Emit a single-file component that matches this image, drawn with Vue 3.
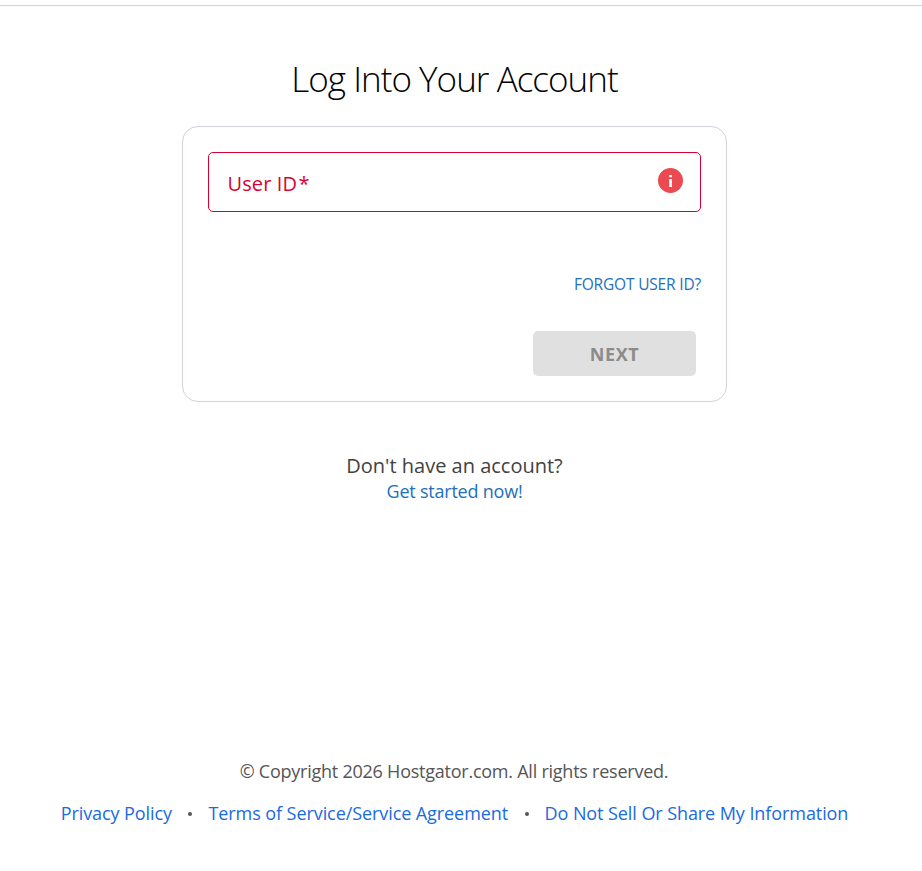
<template>
    <div class="page">
        <div class="topline"></div>
        <main class="login">
            <h1>Log Into Your Account</h1>
            <form class="card" @submit.prevent>
                <div class="field">
                    <label for="userid">User ID<span>*</span></label>
                    <input id="userid" v-model="userId" type="text" />
                    <svg class="info" viewBox="0 0 25 25">
                        <circle cx="12.5" cy="12.5" r="12.5" fill="#ea4a50" />
                        <rect x="11.2" y="7" width="2.7" height="2.2" fill="#fff" />
                        <rect x="11.2" y="11" width="2.7" height="8" fill="#fff" />
                    </svg>
                </div>
                <a href="#" class="forgot">FORGOT USER ID?</a>
                <button class="next" :disabled="!userId">NEXT</button>
            </form>
            <div class="signup">
                <p>Don't have an account?</p>
                <a href="#">Get started now!</a>
            </div>
        </main>
        <footer class="footer">
            <p>© Copyright 2026 Hostgator.com. All rights reserved.</p>
            <ul>
                <li v-for="item in links" :key="item">
                    <a href="#">{{ item }}</a>
                </li>
            </ul>
        </footer>
    </div>
</template>

<script setup>
    import { ref } from 'vue';

    const userId = ref('');

    const links = [
        'Privacy Policy',
        'Terms of Service/Service Agreement',
        'Do Not Sell Or Share My Information'
    ];
</script>

<style>
    body {
        margin: 0;
        background-color: #fff;
    }
</style>

<style scoped>
    .page {
        display: flex;
        flex-direction: column;
        box-sizing: border-box;
        height: 871px;
        padding-top: 5px;
        overflow: hidden;
        font-family: "Open Sans", sans-serif;
    }

    .topline {
        height: 1px;
        flex-shrink: 0;
        background-color: #d1d1db;
    }

    .login {
        display: flex;
        flex-direction: column;
        align-items: center;
        width: 909px;
    }

    h1 {
        margin: 48px 0 23px;
        font-size: 35px;
        font-weight: 300;
        line-height: 49px;
        letter-spacing: -0.97px;
        color: #000;
    }

    .card {
        display: flex;
        flex-direction: column;
        align-items: flex-end;
        box-sizing: border-box;
        width: 545px;
        height: 276px;
        padding: 25px;
        border: 1px solid #d0d3dc;
        border-radius: 16px;
    }

    .field {
        display: flex;
        align-items: center;
        box-sizing: border-box;
        width: 493px;
        height: 60px;
        padding: 0 17px 0 18.5px;
        border: 1px solid #dc0032;
        border-radius: 5px;
    }

    .field label {
        padding-top: 2px;
        font-size: 20px;
        font-weight: 500;
        letter-spacing: 0.1px;
        color: #dc0032;
    }

    .field label span {
        margin-left: 1.5px;
    }

    .field input {
        flex: 1;
        min-width: 0;
        border: none;
        outline: none;
        background: none;
    }

    .info {
        width: 25px;
        height: 25px;
        margin-bottom: 3px;
    }

    a {
        color: #2270bd;
        text-decoration: none;
    }

    .forgot {
        margin-top: 62px;
        font-size: 15.5px;
        line-height: 20px;
        letter-spacing: -0.18px;
    }

    .next {
        width: 163px;
        height: 45px;
        margin: 37px 5px 0 0;
        padding: 0;
        border: none;
        border-radius: 5px;
        background-color: #e0e0e0;
        color: #8b8b8b;
        font-family: inherit;
        font-size: 18px;
        font-weight: 700;
        letter-spacing: 0.6px;
    }

    .signup {
        margin-top: 51px;
        text-align: center;
        font-size: 18px;
        line-height: 25px;
        letter-spacing: -0.22px;
    }

    .signup p {
        margin: 0;
        font-size: 20px;
        line-height: 26px;
        letter-spacing: 0;
        color: #424242;
    }

    .footer {
        width: 908px;
        margin-top: 254px;
        font-size: 18px;
        line-height: 26px;
        letter-spacing: -0.24px;
        text-align: center;
        color: #555;
    }

    .footer p {
        margin: 0 0 16px;
    }

    .footer ul {
        display: flex;
        justify-content: center;
        margin: 0;
        padding: 0 0 0 1px;
        list-style: none;
        letter-spacing: -0.08px;
    }

    .footer li {
        display: flex;
        align-items: center;
    }

    .footer li + li::before {
        content: "";
        width: 4px;
        height: 4px;
        margin: 2px 16px 0 16.5px;
        border-radius: 50%;
        background-color: #555;
    }

    .footer a {
        font-weight: 500;
        color: #196bde;
    }
</style>
